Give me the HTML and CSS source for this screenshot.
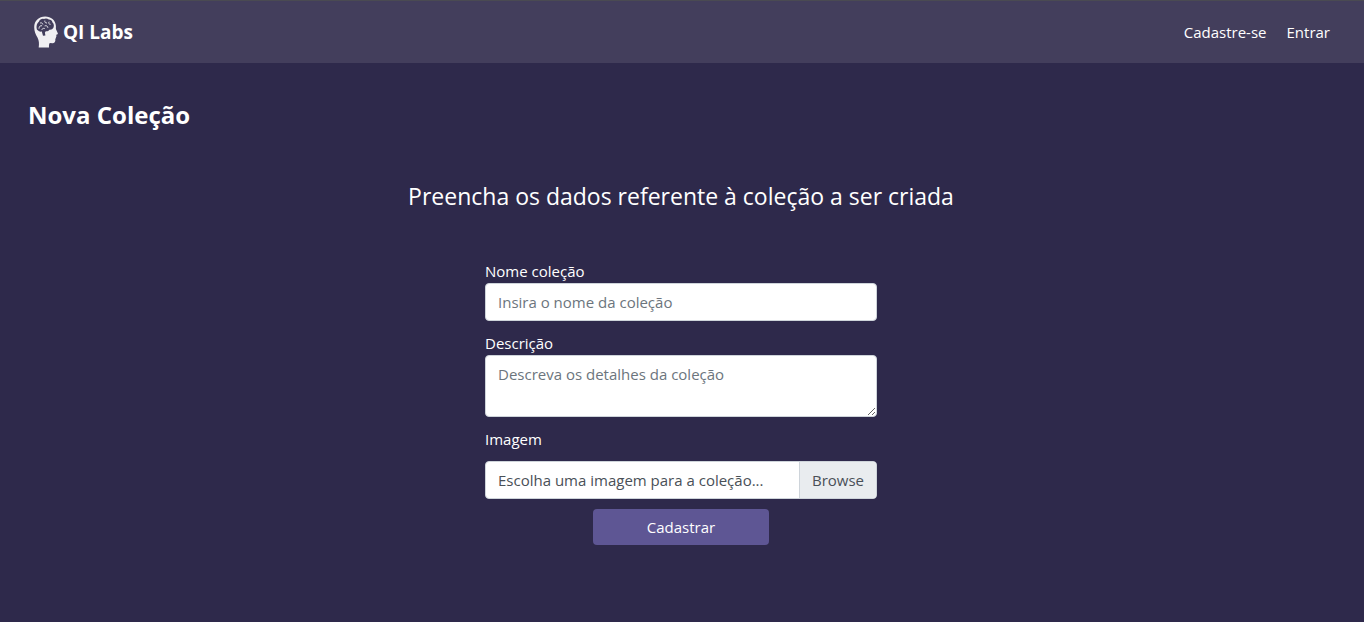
FILE: index.html
```
<!DOCTYPE html>
<html lang="pt-BR">
<head>
<meta charset="utf-8">
<meta name="viewport" content="width=device-width, initial-scale=1">
<title>QI Labs - Nova Coleção</title>
<link rel="stylesheet" href="styles.css">
</head>
<body>
<header class="navbar">
  <a class="brand" href="#">
    <svg class="brand-icon" viewBox="0 0 24 32" aria-hidden="true">
      <path fill="#f0eff2" d="M4.700 31.600C5.300 27.500 5 24.500 3.600 21.700 1.600 18.500 .2 14.800 .2 11.200 .2 4.500 4.900 .4 11.200 .4c5.800 0 10.200 3.600 10.700 9.300.1 1.600-.2 2.800.2 3.900l1.700 3.700c.2.600-.1.900-.7 1.100l-.9.300.3 1.700-.7.700.3.800-.8.900c.3 2.300-.3 4.600-2.500 4.500l-2.900-.2c-.8.700-1 1.500-.9 4.500z"/>
      <path fill="#423d5c" d="M2.800 13.200C2 10.200 2.900 7 5 5.500c.7-2 3-3 4.800-2.500 1.600-.9 3.800-.7 5 .6 2 0 3.400 1.300 3.700 3 1.500 1.200 1.800 3.500.9 5.200-.8 1.500-2.400 2.200-4 1.900-.8 1.300-2.100 1.800-3.600 1.600l-.9 1.200.5 3-2.400.2-1.200-4.100c-1.700.4-3 0-3.600-1-.7-.3-1.200-.7-1.400-1.400z"/>
      <path fill="none" stroke="#e2e0e7" stroke-width="1" stroke-linecap="round" d="M5 12.300c.2-2 1.200-2.900 2.700-2.600M6.500 6.900c1.300-.3 2 .2 2.300 1.200M10.800 5c-.2 1.300.5 2 1.800 2M15 6c-.7 1.300-.2 2.200 1.200 2.300M11 9.800c1.600-.4 2.500.1 2.800 1.600M8 13.400c.4-1 1.200-1.300 2.400-1"/>
    </svg>
    <span>QI Labs</span>
  </a>
  <nav class="nav-links">
    <a href="#">Cadastre-se</a>
    <a href="#">Entrar</a>
  </nav>
</header>
<main class="page">
  <h1 class="page-title">Nova Coleção</h1>
  <h2 class="page-subtitle">Preencha os dados referente à coleção a ser criada</h2>
  <form class="form">
    <div class="field">
      <label for="nome">Nome coleção</label>
      <input class="control" id="nome" type="text" placeholder="Insira o nome da coleção">
    </div>
    <div class="field">
      <label for="descricao">Descrição</label>
      <textarea class="control control-area" id="descricao" placeholder="Descreva os detalhes da coleção"></textarea>
    </div>
    <div class="field field-file">
      <label for="imagem">Imagem</label>
      <div class="file">
        <input class="file-input" id="imagem" type="file">
        <span class="file-name">Escolha uma imagem para a coleção...</span>
        <span class="file-browse">Browse</span>
      </div>
    </div>
    <button class="submit" type="submit">Cadastrar</button>
  </form>
</main>
</body>
</html>
```
FILE: styles.css
```
* { box-sizing: border-box; }

body {
  margin: 0;
  min-height: 100vh;
  background: #2e294b;
  color: #fff;
  font: 15px/24px "Segoe UI", "Open Sans", sans-serif;
}

.navbar {
  display: flex;
  align-items: center;
  justify-content: space-between;
  padding: 15px 34px;
  border-top: 1px solid #4a4a52;
  background: #433e5c;
}

a { color: inherit; text-decoration: none; }

.brand {
  display: flex;
  align-items: center;
  gap: 5px;
  font-size: 19px;
  font-weight: 700;
}

.brand-icon { width: 24px; height: 32px; }

.nav-links { display: flex; gap: 20px; }

.page { padding: 34px 30px 34px 28px; }

.page-title {
  margin: 0;
  font-size: 24px;
  font-weight: 700;
  line-height: 36px;
}

.page-subtitle {
  margin: 45px 0;
  font-size: 23px;
  font-weight: 400;
  line-height: 36px;
  text-align: center;
}

.form {
  display: flex;
  flex-direction: column;
  width: 100%;
  max-width: 392px;
  margin: 0 auto;
}

.field {
  display: flex;
  flex-direction: column;
  margin-bottom: 10px;
}

.control {
  display: block;
  width: 100%;
  height: 38px;
  padding: 6px 12px;
  border: 1px solid #ced4da;
  border-radius: 4px;
  background: #fff;
  color: #495057;
  font: inherit;
}

.control::placeholder { color: #6c757d; opacity: 1; }

.control-area { height: 62px; resize: vertical; }

.field-file { gap: 10px; }

.file {
  position: relative;
  display: flex;
  overflow: hidden;
  border: 1px solid #ced4da;
  border-radius: 4px;
  background: #fff;
  color: #495057;
}

.file-input {
  position: absolute;
  inset: 0;
  width: 100%;
  opacity: 0;
  cursor: pointer;
}

.file-name { flex: 1; padding: 6px 12px; }

.file-browse {
  padding: 6px 12px;
  border-left: 1px solid #ced4da;
  background: #e9ecef;
}

.submit {
  align-self: center;
  width: 176px;
  padding: 6px 12px;
  border: 0;
  border-radius: 4px;
  background: #5e5694;
  color: #fff;
  font: inherit;
}
```
